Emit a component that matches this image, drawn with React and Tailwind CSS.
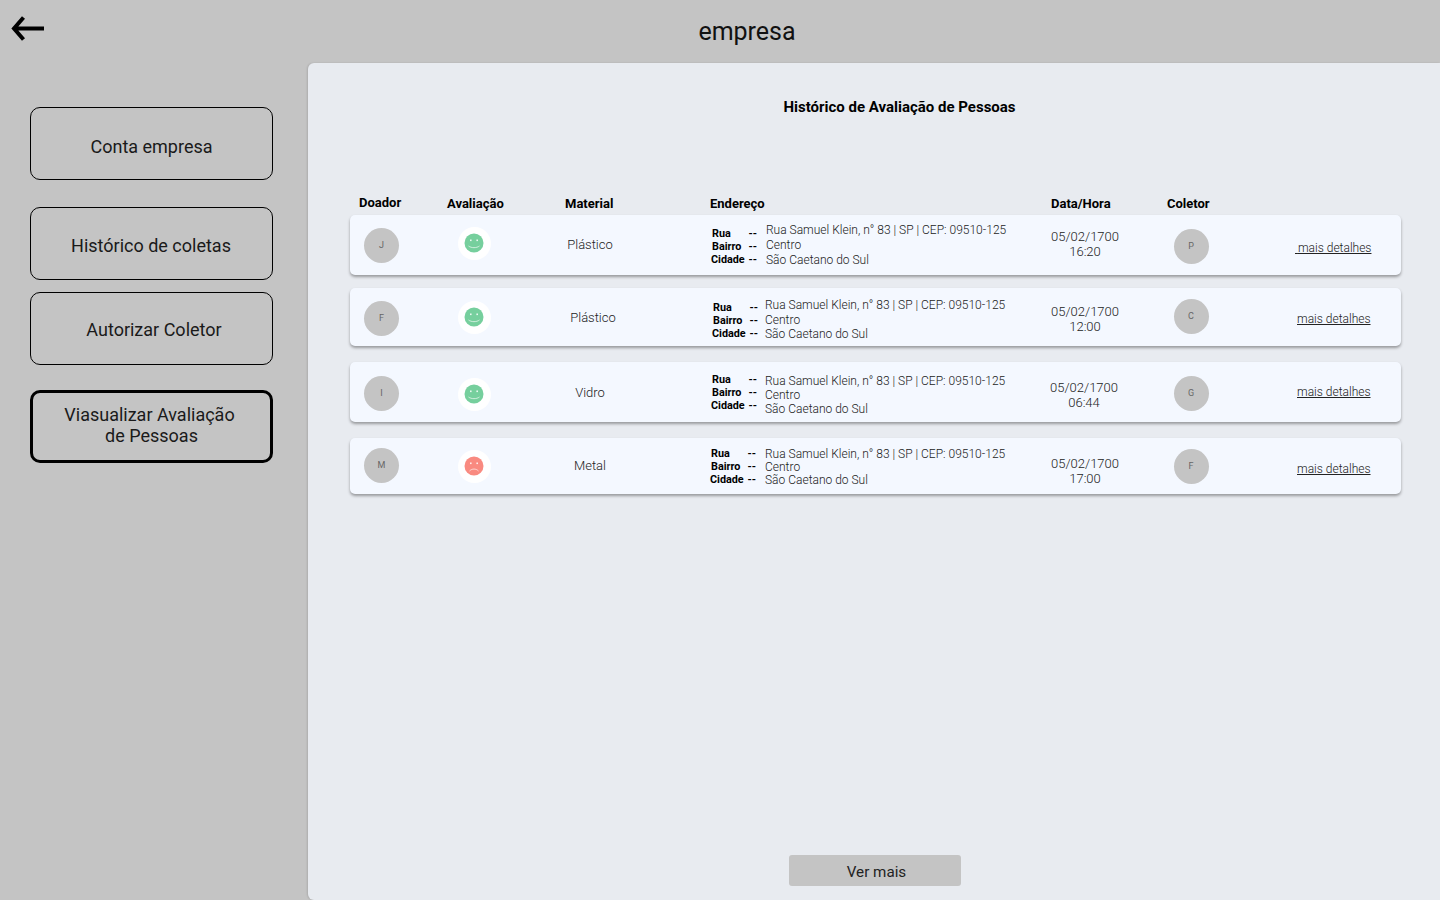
import { useState } from "react";

const menu = [
  { label: "Conta empresa", box: "mt-[44px]", text: "pt-[6px]" },
  { label: "Histórico de coletas", box: "mt-[27px]", text: "pt-[4px] -ml-[1px]" },
  { label: "Autorizar Coletor", box: "mt-[12px]", text: "pt-[1px] pl-[5px]" },
];

const rows = [
  {
    h: "h-[60px] mb-[13px]", doador: "J", coletor: "P", material: "Plástico", ok: true,
    data: "05/02/1700", hora: "16:20",
    avatar: "mt-0", smile: "-mt-[4px]", mat: "mt-0", addr: "mt-0 ml-[9px] leading-[15px]", labels: "mt-[3px]", dataBox: "-mt-[3px]", col: "mt-[2px]",
    link: "mt-[6px] ml-[55px]", prefix: "\u00a0",
  },
  {
    h: "h-[58px] mb-[16px]", doador: "F", coletor: "C", material: "Plástico", ok: true,
    data: "05/02/1700", hora: "12:00",
    avatar: "mt-[2px]", smile: "mt-0", mat: "ml-[6px] mt-[2px]", addr: "mt-[6px] ml-[7px] leading-[14.5px]", labels: "mt-[7px] ml-[1px]", dataBox: "mt-[4px]", col: "-mt-[2px]",
    link: "mt-[4px] ml-[57px]", prefix: "",
  },
  {
    h: "h-[60px] mb-[16px]", doador: "I", coletor: "G", material: "Vidro", ok: true,
    data: "05/02/1700", hora: "06:44",
    avatar: "mt-[2px]", smile: "mt-[4px]", mat: "mt-[2px]", addr: "mt-[5px] ml-[8px] leading-[14px]", labels: "mt-0", dataBox: "mt-[5px] -ml-[2px]", col: "mt-[2px]",
    link: "mt-0 ml-[57px]", prefix: "",
  },
  {
    h: "h-[56px]", doador: "M", coletor: "F", material: "Metal", ok: false,
    data: "05/02/1700", hora: "17:00",
    avatar: "-mt-[2px]", smile: "mt-0", mat: "mt-0", addr: "mt-[2px] ml-[9px] leading-[13px]", labels: "mt-0 -ml-[1px]", dataBox: "mt-[10px]", col: "mt-0",
    link: "mt-[6px] ml-[57px]", prefix: "",
  },
];

function Avatar({ letter, cls }) {
  return (
    <div className={"w-[35px] h-[35px] rounded-full bg-[#c4c4c4] flex items-center justify-center pt-[2px] text-[9px] text-[#666] " + cls}>
      {letter}
    </div>
  );
}

function Smile({ ok }) {
  return (
    <svg width="20" height="20" viewBox="0 0 20 20">
      <circle cx="10" cy="10" r="9.5" fill={ok ? "#76cf9d" : "#f98a80"} />
      <rect x="6" y="6.5" width="1.6" height="1.6" fill="#fff" opacity="0.85" />
      <rect x="12.4" y="6.5" width="1.6" height="1.6" fill="#fff" opacity="0.85" />
      {ok ? (
        <path d="M4.5 13c3 2.2 8 2.2 11 0" fill="none" stroke="#fff" strokeWidth="0.8" opacity="0.8" />
      ) : (
        <path d="M5.5 15c2.5-2.6 6.5-2.6 9 0" fill="none" stroke="#fff" strokeWidth="0.8" opacity="0.8" />
      )}
    </svg>
  );
}

function Row({ r }) {
  return (
    <div className={"flex items-center bg-[#f4f8ff] rounded-[5px] shadow-[0_2px_3px_rgba(0,0,0,0.35)] pl-[14px] " + r.h}>
      <div className="w-[76px] shrink-0">
        <Avatar letter={r.doador} cls={r.avatar} />
      </div>
      <div className="w-[70px] shrink-0 flex justify-center pr-[2px]">
        <div className={"w-[33px] h-[33px] rounded-full bg-white flex items-center justify-center " + r.smile}>
          <Smile ok={r.ok} />
        </div>
      </div>
      <div className="w-[160px] shrink-0 flex justify-center">
        <span className={"text-[13px] font-light text-[#222] " + r.mat}>{r.material}</span>
      </div>
      <div className="w-[360px] shrink-0 flex items-center pl-[41px]">
        <div className={"w-[46px] shrink-0 text-[10.8px] leading-[13px] font-bold text-black " + r.labels}>
          <div className="flex justify-between pl-[1px]"><span>Rua</span><span>--</span></div>
          <div className="flex justify-between pl-[1px]"><span>Bairro</span><span>--</span></div>
          <div className="flex justify-between"><span>Cidade</span><span>--</span></div>
        </div>
        <div className={"text-[12px] font-light text-[#222] whitespace-nowrap " + r.addr}>
          <div>Rua Samuel Klein, n° 83 | SP | CEP: 09510-125</div>
          <div>Centro</div>
          <div>São Caetano do Sul</div>
        </div>
      </div>
      <div className="w-[110px] shrink-0 text-center">
        <div className={"text-[13px] leading-[15px] font-light text-[#222] " + r.dataBox}>
          <div>{r.data}</div>
          <div>{r.hora}</div>
        </div>
      </div>
      <div className="w-[100px] shrink-0 flex justify-center pl-[2px]">
        <Avatar letter={r.coletor} cls={r.col} />
      </div>
      <a className={"text-[12px] font-light text-[#222] underline whitespace-nowrap " + r.link}>
        {r.prefix}
        mais detalhes
      </a>
    </div>
  );
}

export default function App() {
  const [verMais] = useState(false);

  return (
    <div className="h-[900px] overflow-hidden bg-[#c4c4c4] font-['Roboto',sans-serif] text-[#1a1a1a]">
      <header className="h-[63px] relative flex justify-center">
        <svg className="absolute left-[11px] top-[15px]" width="34" height="26" viewBox="0 0 34 26" fill="none">
          <path d="M33 13.5H3.5M12.5 2.5 3 13.5 12.5 24.5" stroke="#000" strokeWidth="4" />
        </svg>
        <h1 className="text-[25px] leading-[28px] mt-[18px] ml-[54px] text-[#111]">empresa</h1>
      </header>

      <div className="flex h-[837px]">
        <aside className="w-[308px] shrink-0 pl-[30px]">
          {menu.map((m) => (
            <div key={m.label} className={"w-[243px] h-[73px] border border-black rounded-[10px] flex items-center justify-center text-[18px] " + m.box}>
              <span className={m.text}>{m.label}</span>
            </div>
          ))}
          <div className="w-[243px] h-[73px] mt-[25px] border-[3px] border-black rounded-[10px] flex items-center justify-center text-center text-[18px] leading-[21px]">
            <span className="-ml-[4px] pb-[4px]">
              Viasualizar Avaliação
              <br />
              <span className="ml-[4px]">de Pessoas</span>
            </span>
          </div>
        </aside>

        <main className="flex-1 bg-[#e8ebf0] rounded-l-[6px] shadow-[-1px_0_2px_rgba(0,0,0,0.12)] flex flex-col pl-[42px] pr-[39px] pb-[14px]">
          <h2 className="text-[15px] font-bold text-black text-center mt-[35px] pl-[48px] leading-[18px]">
            Histórico de Avaliação de Pessoas
          </h2>

          <div className="flex text-[13px] font-bold text-black leading-[16px] mt-[80px] mb-[3px] pl-[9px]">
            <span className="w-[88px] -mt-[1px]">Doador</span>
            <span className="w-[118px]">Avaliação</span>
            <span className="w-[145px]">Material</span>
            <span className="w-[341px]">Endereço</span>
            <span className="w-[116px]">Data/Hora</span>
            <span>Coletor</span>
          </div>

          <div>
            {rows.map((r) => (
              <Row key={r.doador + r.coletor} r={r} />
            ))}
          </div>

          <div className="mt-auto flex justify-center pr-[2px]">
            <button className="w-[172px] h-[31px] bg-[#c4c4c4] rounded-[3px] text-[15.2px] text-[#222] pt-[4px] pl-[4px]">
              {verMais ? "Ver menos" : "Ver mais"}
            </button>
          </div>
        </main>
      </div>
    </div>
  );
}
